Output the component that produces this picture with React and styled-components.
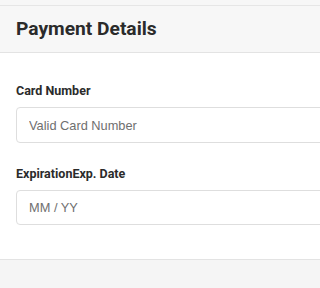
import React from "react";
import styled, { createGlobalStyle } from "styled-components";

const Global = createGlobalStyle`
  html, body { margin: 0; padding: 0; background: #f7f7f7; overflow: hidden; }
  body { font-family: Roboto, "Helvetica Neue", Arial, sans-serif; color: #212529; }
  * { box-sizing: border-box; }
`;

const Card = styled.div`
  margin-top: 5px;
  background: #fff;
  border-top: 1px solid #e6e6e6;
  height: 283px;
  display: flex;
  flex-direction: column;
  overflow: hidden;
`;

const Header = styled.div`
  background: #f7f7f7;
  border-bottom: 1px solid #e3e3e3;
  height: 47px;
  padding: 0 16px;
  display: flex;
  align-items: center;
`;

const Title = styled.h2`
  margin: 0;
  font-size: 19.2px;
  font-weight: 700;
  color: #2b2b2b;
  line-height: 1;
`;

const Body = styled.div`
  padding: 28px 0 34px 16px;
  display: flex;
  flex-direction: column;
  gap: 21px;
  border-bottom: 1px solid #e3e3e3;
`;

const Group = styled.div`
  display: flex;
  flex-direction: column;
`;

const Label = styled.label`
  font-size: 12.5px;
  font-weight: 700;
  line-height: 20px;
  color: #2b2b2b;
  margin-bottom: 6px;
`;

const Input = styled.input`
  width: calc(100% + 20px);
  height: ${p => p.$h}px;
  border: 1px solid #dedede;
  border-radius: 4px;
  padding: 0 12px;
  font-family: "Liberation Sans", Arial, sans-serif;
  font-size: 12.8px;
  color: #495057;
  background: #fff;
  outline: none;
  &::placeholder { color: #6f6f6f; }
`;

const Footer = styled.div`
  flex: 1;
  background: #f5f5f5;
`;

export default function App() {
  return (
    <>
      <Global />
      <Card>
        <Header>
          <Title>Payment Details</Title>
        </Header>
        <Body>
          <Group>
            <Label>Card Number</Label>
            <Input $h={36} placeholder="Valid Card Number" />
          </Group>
          <Group>
            <Label>ExpirationExp. Date</Label>
            <Input $h={35} placeholder="MM / YY" />
          </Group>
        </Body>
        <Footer />
      </Card>
    </>
  );
}
